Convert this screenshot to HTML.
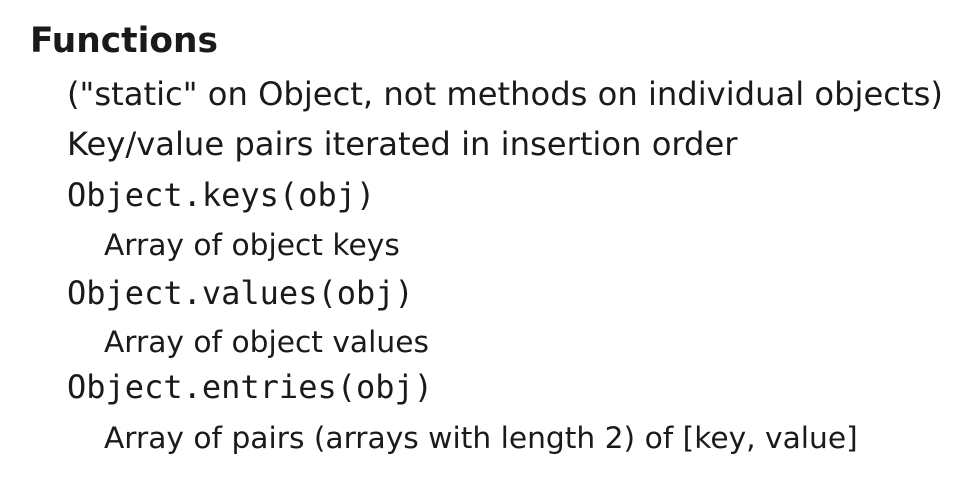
<!DOCTYPE html>
<html><head><meta charset="utf-8"><style>
html,body{margin:0;padding:0;background:#fff;width:978px;height:500px;overflow:hidden}
div{position:absolute;white-space:nowrap;color:#1a1a1a;font-family:"DejaVu Sans","Liberation Sans",sans-serif;line-height:1}
.t{left:30px;top:24px;font-size:34.4px;font-weight:bold}
.l{left:67px;font-size:32.2px}
.m{left:67px;font-size:32px;font-family:"DejaVu Sans Mono","Liberation Mono",monospace}
.s{left:104px;font-size:29.7px}
</style></head><body>
<div class="t">Functions</div>
<div class="l" style="top:78px">("static" on Object, not methods on individual objects)</div>
<div class="l" style="top:128px">Key/value pairs iterated in insertion order</div>
<div class="m" style="top:179px">Object.keys(obj)</div>
<div class="s" style="top:231px">Array of object keys</div>
<div class="m" style="top:277px">Object.values(obj)</div>
<div class="s" style="top:328px">Array of object values</div>
<div class="m" style="top:371px">Object.entries(obj)</div>
<div class="s" style="top:424px">Array of pairs (arrays with length 2) of [key, value]</div>
</body></html>
